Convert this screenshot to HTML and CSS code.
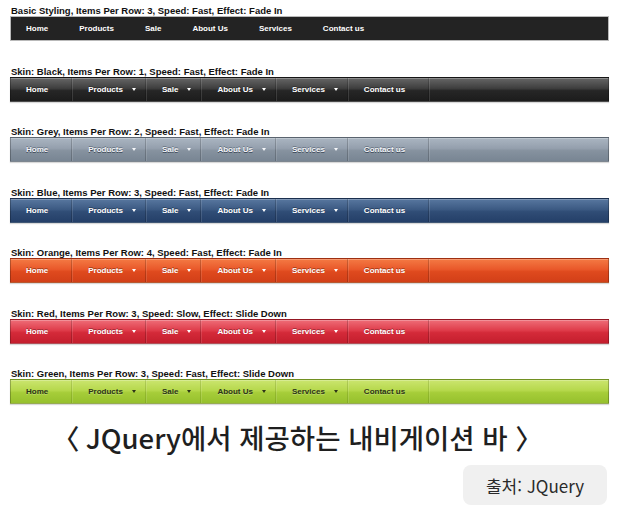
FILE: index.html
```html
<!DOCTYPE html>
<html lang="ko">
<head>
<meta charset="utf-8">
<title>JQuery Navigation Bars</title>
<link rel="stylesheet" href="styles.css">
</head>
<body>
<main class="page">
  <section class="demo">
    <p class="label">Basic Styling, Items Per Row: 3, Speed: Fast, Effect: Fade In</p>
    <nav class="bar basic">
      <a class="item">Home</a><a class="item">Products</a><a class="item">Sale</a><a class="item">About Us</a><a class="item">Services</a><a class="item">Contact us</a>
    </nav>
  </section>
  <section class="demo">
    <p class="label">Skin: Black, Items Per Row: 1, Speed: Fast, Effect: Fade In</p>
    <nav class="bar skin black">
      <a class="item">Home</a><a class="item drop">Products<i class="arrow"></i></a><a class="item drop">Sale<i class="arrow"></i></a><a class="item drop">About Us<i class="arrow"></i></a><a class="item drop">Services<i class="arrow"></i></a><a class="item">Contact us</a>
    </nav>
  </section>
  <section class="demo">
    <p class="label">Skin: Grey, Items Per Row: 2, Speed: Fast, Effect: Fade In</p>
    <nav class="bar skin grey">
      <a class="item">Home</a><a class="item drop">Products<i class="arrow"></i></a><a class="item drop">Sale<i class="arrow"></i></a><a class="item drop">About Us<i class="arrow"></i></a><a class="item drop">Services<i class="arrow"></i></a><a class="item">Contact us</a>
    </nav>
  </section>
  <section class="demo">
    <p class="label">Skin: Blue, Items Per Row: 3, Speed: Fast, Effect: Fade In</p>
    <nav class="bar skin blue">
      <a class="item">Home</a><a class="item drop">Products<i class="arrow"></i></a><a class="item drop">Sale<i class="arrow"></i></a><a class="item drop">About Us<i class="arrow"></i></a><a class="item drop">Services<i class="arrow"></i></a><a class="item">Contact us</a>
    </nav>
  </section>
  <section class="demo">
    <p class="label">Skin: Orange, Items Per Row: 4, Speed: Fast, Effect: Fade In</p>
    <nav class="bar skin orange">
      <a class="item">Home</a><a class="item drop">Products<i class="arrow"></i></a><a class="item drop">Sale<i class="arrow"></i></a><a class="item drop">About Us<i class="arrow"></i></a><a class="item drop">Services<i class="arrow"></i></a><a class="item">Contact us</a>
    </nav>
  </section>
  <section class="demo">
    <p class="label">Skin: Red, Items Per Row: 3, Speed: Slow, Effect: Slide Down</p>
    <nav class="bar skin red">
      <a class="item">Home</a><a class="item drop">Products<i class="arrow"></i></a><a class="item drop">Sale<i class="arrow"></i></a><a class="item drop">About Us<i class="arrow"></i></a><a class="item drop">Services<i class="arrow"></i></a><a class="item">Contact us</a>
    </nav>
  </section>
  <section class="demo last">
    <p class="label">Skin: Green, Items Per Row: 3, Speed: Fast, Effect: Slide Down</p>
    <nav class="bar skin green">
      <a class="item">Home</a><a class="item drop">Products<i class="arrow"></i></a><a class="item drop">Sale<i class="arrow"></i></a><a class="item drop">About Us<i class="arrow"></i></a><a class="item drop">Services<i class="arrow"></i></a><a class="item">Contact us</a>
    </nav>
  </section>
  <h1 class="title">〈 JQuery에서 제공하는 내비게이션 바 〉</h1>
  <div class="source-row"><div class="source">출처: JQuery</div></div>
</main>
</body>
</html>
```

FILE: styles.css
```css
html, body {
  margin: 0;
  padding: 0;
  background: #ffffff;
}

.page {
  width: 599px;
  padding: 5px 13px 0 10px;
  font-family: "Liberation Sans", Arial, sans-serif;
}

.demo {
  margin: 0 0 24.5px 0;
}
.demo.last {
  margin-bottom: 0;
}

.label {
  margin: 0 0 0 1px;
  font-size: 9.5px;
  line-height: 11px;
  font-weight: bold;
  color: #111111;
  white-space: nowrap;
}

.bar {
  display: flex;
  align-items: stretch;
  height: 25px;
  box-sizing: border-box;
}

.item {
  display: flex;
  align-items: center;
  font-size: 8px;
  font-weight: bold;
  color: #ffffff;
  white-space: nowrap;
}

/* basic bar */
.basic {
  background: #232323;
  border: 1px solid #b9b9b9;
}
.basic .item {
  padding: 0 15.5px;
}
.basic .item:first-child {
  padding-left: 15px;
}

/* skinned bars */
.skin {
  border: 1px solid rgba(0, 0, 0, 0.25);
  box-shadow: inset 0 1px 0 rgba(255, 255, 255, 0.25), 0 1px 1px rgba(0, 0, 0, 0.15);
}
.skin .item {
  padding: 0 23px 0 16px;
  border-right: 1px solid rgba(0, 0, 0, 0.18);
  box-shadow: 1px 0 0 rgba(255, 255, 255, 0.12);
  text-shadow: 0 -1px 0 rgba(0, 0, 0, 0.35);
}
.skin .item:first-child {
  padding-left: 15px;
}
.skin .item.drop {
  padding-right: 9px;
}
.arrow {
  display: block;
  width: 0;
  height: 0;
  margin-left: 9px;
  border-left: 2.5px solid transparent;
  border-right: 2.5px solid transparent;
  border-top: 3px solid currentColor;
}

.black {
  background: linear-gradient(#666666 0%, #3e3e3e 45%, #262626 55%, #1c1c1c 100%);
}
.grey {
  background: linear-gradient(#aab5c1 0%, #949fad 45%, #86929f 55%, #788593 100%);
}
.grey .item {
  color: #f4f6f9;
  text-shadow: 0 1px 0 rgba(50, 62, 78, 0.85), 0 -1px 0 rgba(50, 62, 78, 0.45);
}
.blue {
  background: linear-gradient(#58779f 0%, #3c5a83 45%, #304d76 55%, #243f68 100%);
}
.orange {
  background: linear-gradient(#f47a44 0%, #e9582a 45%, #df4a1e 55%, #d23f18 100%);
}
.red {
  background: linear-gradient(#ee6d78 0%, #df3c4a 45%, #d42a39 55%, #c41e2d 100%);
}
.green {
  background: linear-gradient(#cbe56f 0%, #b6d84c 45%, #a6cd39 55%, #96c02d 100%);
}
.green .item {
  color: #2c3318;
  text-shadow: 0 1px 0 rgba(255, 255, 255, 0.25);
  border-right-color: rgba(60, 90, 0, 0.18);
}

.title {
  margin: 14px 0 0 42px;
  font-family: "Noto Sans CJK KR", "Noto Sans", sans-serif;
  font-size: 27.5px;
  line-height: 38px;
  font-weight: 500;
  color: #1f1f1f;
  white-space: nowrap;
}

.source-row {
  display: flex;
  justify-content: flex-end;
  margin: 9px 2px 0 0;
}
.source {
  width: 144px;
  height: 40px;
  display: flex;
  align-items: center;
  justify-content: center;
  background: #f0f0f0;
  border-radius: 8px;
  font-family: "Noto Sans CJK KR", "Noto Sans", sans-serif;
  font-size: 17px;
  color: #2a2a2a;
}
```
